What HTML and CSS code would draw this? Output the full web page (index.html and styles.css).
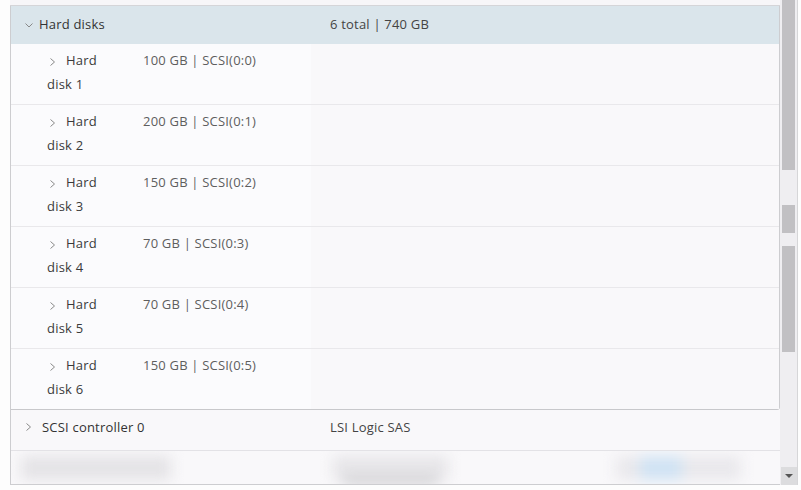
FILE: index.html
```html
<!DOCTYPE html>
<html lang="en">
<head>
  <meta charset="UTF-8" />
  <meta name="viewport" content="width=device-width, initial-scale=1.0"/>
  <title>VM Hardware</title>
  <link rel="stylesheet" href="styles.css">
</head>
<body>

  <div class="screen">
    <div class="main">
      <div class="cut"></div>

      <div class="panel">
        <!-- Hard disks group -->
        <div class="group">
          <div class="group-head">
            <div class="cell-label">
              <svg class="chev-down" width="8" height="5" viewBox="0 0 8 5"><polyline points="0.5,0.5 4,4 7.5,0.5" /></svg>
              Hard disks
            </div>
            <div class="cell-value">6 total | 740 GB</div>
          </div>

          <div class="disk">
            <div class="disk-main">
              <div class="disk-name"><svg class="chev-right" width="5" height="8" viewBox="0 0 5 8"><polyline points="0.5,0.5 4.5,4 0.5,7.5" /></svg>Hard disk 1</div>
              <div class="disk-value">100 GB | SCSI(0:0)</div>
            </div>
            <div class="disk-rest"></div>
          </div>
          <div class="disk">
            <div class="disk-main">
              <div class="disk-name"><svg class="chev-right" width="5" height="8" viewBox="0 0 5 8"><polyline points="0.5,0.5 4.5,4 0.5,7.5" /></svg>Hard disk 2</div>
              <div class="disk-value">200 GB | SCSI(0:1)</div>
            </div>
            <div class="disk-rest"></div>
          </div>
          <div class="disk">
            <div class="disk-main">
              <div class="disk-name"><svg class="chev-right" width="5" height="8" viewBox="0 0 5 8"><polyline points="0.5,0.5 4.5,4 0.5,7.5" /></svg>Hard disk 3</div>
              <div class="disk-value">150 GB | SCSI(0:2)</div>
            </div>
            <div class="disk-rest"></div>
          </div>
          <div class="disk">
            <div class="disk-main">
              <div class="disk-name"><svg class="chev-right" width="5" height="8" viewBox="0 0 5 8"><polyline points="0.5,0.5 4.5,4 0.5,7.5" /></svg>Hard disk 4</div>
              <div class="disk-value">70 GB | SCSI(0:3)</div>
            </div>
            <div class="disk-rest"></div>
          </div>
          <div class="disk">
            <div class="disk-main">
              <div class="disk-name"><svg class="chev-right" width="5" height="8" viewBox="0 0 5 8"><polyline points="0.5,0.5 4.5,4 0.5,7.5" /></svg>Hard disk 5</div>
              <div class="disk-value">70 GB | SCSI(0:4)</div>
            </div>
            <div class="disk-rest"></div>
          </div>
          <div class="disk">
            <div class="disk-main">
              <div class="disk-name"><svg class="chev-right" width="5" height="8" viewBox="0 0 5 8"><polyline points="0.5,0.5 4.5,4 0.5,7.5" /></svg>Hard disk 6</div>
              <div class="disk-value">150 GB | SCSI(0:5)</div>
            </div>
            <div class="disk-rest"></div>
          </div>
        </div>

        <!-- Controller -->
        <div class="row">
          <div class="cell-label row-label">
            <svg class="chev-right" width="5" height="8" viewBox="0 0 5 8"><polyline points="0.5,0.5 4.5,4 0.5,7.5" /></svg>SCSI controller 0
          </div>
          <div class="cell-value">LSI Logic SAS</div>
        </div>

        <!-- next row, out of focus -->
        <div class="row row-blur">
          <div class="blob blob-a"></div>
          <div class="blob blob-b"></div>
          <div class="blob blob-c"><span class="blob-blue"></span></div>
        </div>
      </div>
    </div>

    <div class="scrollbar">
      <div class="thumb thumb-1"></div>
      <div class="thumb thumb-2"></div>
      <div class="thumb thumb-3"></div>
      <div class="scroll-btn"><span class="arrow-down"></span></div>
    </div>
  </div>

</body>
</html>
```

FILE: styles.css
```css
body {
  margin: 0;
  padding: 0;
  background: #fdfdfd;
  font-family: "Open Sans", "Liberation Sans", sans-serif;
  font-size: 13px;
  letter-spacing: 0.2px;
  color: #333;
}

.screen {
  display: flex;
  align-items: flex-start;
}

.main {
  width: 770px;
  margin-left: 10px;
}

.cut {
  height: 5px;
  background: #f7f6f8;
  border-bottom: 1px solid #d5d5d8;
}

.panel {
  border-left: 1px solid #cdcdd0;
  border-bottom: 1px solid #cdcdd0;
  background: #faf9fb;
}

/* Hard disks group */
.group {
  border-right: 1px solid #cdcdd0;
  border-bottom: 1px solid #c8c8cb;
  border-bottom-right-radius: 3px;
}

.group-head {
  display: grid;
  grid-template-columns: 319px 1fr;
  align-items: center;
  height: 36px;
  padding-bottom: 2px;
  background: #dae5eb;
}

.cell-label {
  display: flex;
  align-items: center;
  padding-left: 14px;
  color: #333;
}

.cell-value {
  color: #444;
}

.chev-down {
  fill: none;
  stroke: #888;
  stroke-width: 1;
  margin: 2px 6px 0 0;
}

.chev-right {
  fill: none;
  stroke: #888;
  stroke-width: 1;
  display: inline-block;
  vertical-align: -1px;
  margin: 0 11px 0 3px;
}

.disk {
  display: flex;
  border-bottom: 1px solid #e9e8eb;
}

.disk:last-child {
  border-bottom: none;
}

.disk-main {
  display: flex;
  width: 300px;
  padding: 4px 0 8px 36px;
  box-sizing: border-box;
  background: #fbfbfd;
  line-height: 24px;
}

.disk:first-of-type .disk-main {
  background: #fdfcfb;
}

.disk-name {
  width: 96px;
  padding-right: 26px;
  box-sizing: border-box;
  color: #3a3a3a;
}

.disk-value {
  color: #5e5e5e;
}

.disk-rest {
  flex: 1;
  background: #f9f8fa;
}

/* Plain rows */
.row {
  display: grid;
  grid-template-columns: 319px 1fr;
  line-height: 24px;
  padding: 5px 0 11px;
  border-bottom: 1px solid #e3e2e6;
  background: #f9f8fa;
}

.row-label {
  padding-left: 15px;
}

.row-label .chev-right {
  margin: 0 11px 0 0;
}

.row-blur {
  display: flex;
  align-items: center;
  height: 33px;
  padding: 0;
  border-bottom: none;
  overflow: hidden;
}

.blob {
  height: 24px;
  background: #e4e3e6;
  filter: blur(7px);
}

.blob-a {
  width: 150px;
  margin-left: 10px;
}

.blob-b {
  width: 115px;
  margin-left: 162px;
  background: #e6e5e8;
  box-shadow: 0 13px 0 -10px #9a9a9e;
}

.blob-c {
  width: 125px;
  margin-left: 168px;
  background: #e9e8ec;
  display: flex;
  align-items: center;
}

.blob-blue {
  display: block;
  width: 42px;
  height: 24px;
  margin-left: 24px;
  background: #cfe2f3;
}

/* Scrollbar */
.scrollbar {
  width: 17px;
  height: 485px;
  background: #efeef1;
  border-right: 1px solid #d6d6d8;
  display: flex;
  flex-direction: column;
  align-items: center;
}

.thumb {
  width: 13px;
  background: #c1c0c3;
}

.thumb-1 {
  height: 170px;
}

.thumb-2 {
  height: 28px;
  margin-top: 35px;
}

.thumb-3 {
  height: 106px;
  margin-top: 13px;
}

.scroll-btn {
  margin-top: auto;
  width: 16px;
  height: 18px;
  background: #dcdcde;
  display: flex;
  align-items: center;
  justify-content: center;
}

.arrow-down {
  width: 0;
  height: 0;
  border-left: 4px solid transparent;
  border-right: 4px solid transparent;
  border-top: 4px solid #555;
}
```
